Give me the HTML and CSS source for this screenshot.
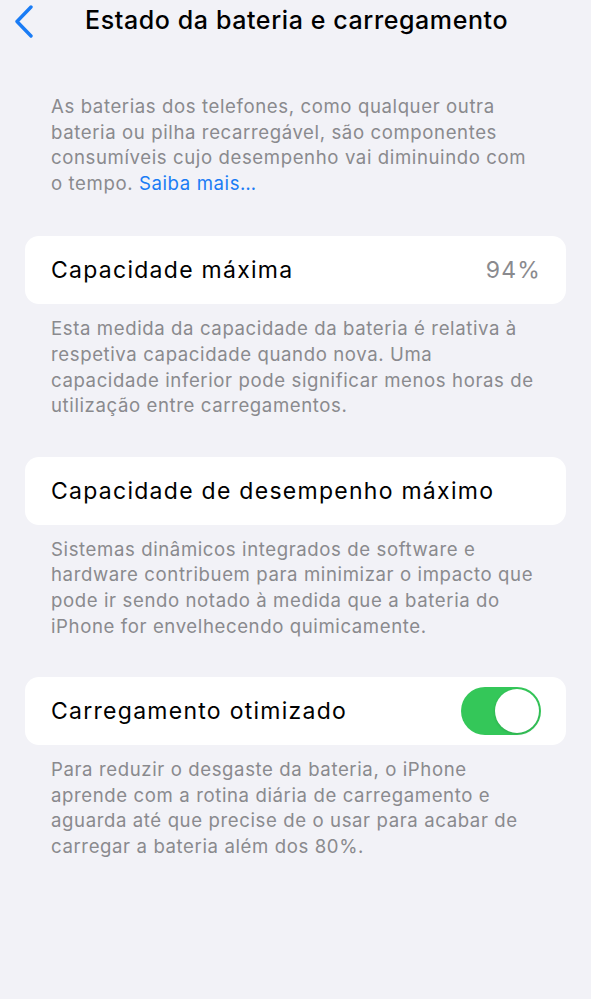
FILE: index.html
```html
<!DOCTYPE html>
<html lang="pt">
<head>
<meta charset="utf-8">
<link rel="stylesheet" href="styles.css">
</head>
<body>
<header class="nav">
  <svg class="back" width="24" height="36" viewBox="0 0 24 36"><path d="M19 5 L5 19.5 L19 34" fill="none" stroke="#1a7cf5" stroke-width="3.4" stroke-linecap="round" stroke-linejoin="round"/></svg>
  <h1 class="title">Estado da bateria e carregamento</h1>
</header>
<main class="content">
  <p class="intro">As baterias dos telefones, como qualquer outra bateria ou pilha recarregável, são componentes consumíveis cujo desempenho vai diminuindo com o tempo. <span class="link">Saiba mais…</span></p>

  <section class="group">
    <div class="card"><span class="label">Capacidade máxima</span><span class="value">94%</span></div>
    <p class="foot">Esta medida da capacidade da bateria é relativa à respetiva capacidade quando nova. Uma capacidade inferior pode significar menos horas de utilização entre carregamentos.</p>
  </section>

  <section class="group">
    <div class="card"><span class="label">Capacidade de desempenho máximo</span></div>
    <p class="foot">Sistemas dinâmicos integrados de software e hardware contribuem para minimizar o impacto que pode ir sendo notado à medida que a bateria do iPhone for envelhecendo quimicamente.</p>
  </section>

  <section class="group">
    <div class="card"><span class="label">Carregamento otimizado</span><span class="toggle"><span class="knob"></span></span></div>
    <p class="foot">Para reduzir o desgaste da bateria, o iPhone aprende com a rotina diária de carregamento e aguarda até que precise de o usar para acabar de carregar a bateria além dos 80%.</p>
  </section>
</main>
</body>
</html>
```

FILE: styles.css
```css
html, body {
  margin: 0;
  padding: 0;
}
body {
  background: #f2f2f7;
  font-family: Inter, "Noto Sans", sans-serif;
  color: #000;
  width: 591px;
  min-height: 999px;
}
.nav {
  height: 42px;
  display: flex;
  align-items: center;
  padding-left: 12px;
}
.back {
  display: block;
  margin-top: -2px;
}
.title {
  margin: -2px 0 0 49px;
  font-size: 25px;
  font-weight: 500;
  letter-spacing: 0.6px;
  white-space: nowrap;
}
.content {
  padding: 52px 25px 0;
}
.intro, .foot {
  margin: 0;
  padding: 0 26px;
  font-size: 18.6px;
  line-height: 25.6px;
  letter-spacing: 0.6px;
  color: #8a8a8e;
}
.link {
  color: #1a7cf5;
}
.intro {
  margin-bottom: 40px;
}
.group {
  margin-bottom: 38px;
}
.card {
  background: #fff;
  border-radius: 14px;
  height: 68px;
  display: flex;
  align-items: center;
  justify-content: space-between;
  padding: 0 25px 0 26px;
}
.label {
  font-size: 23px;
  letter-spacing: 1.27px;
}
.value {
  font-size: 23px;
  letter-spacing: 1.2px;
  color: #8a8a8e;
}
.foot {
  margin-top: 12px;
}
.toggle {
  width: 80px;
  height: 48px;
  border-radius: 24px;
  background: #34c759;
  display: flex;
  align-items: center;
  justify-content: flex-end;
  padding: 0 2px;
  box-sizing: border-box;
}
.knob {
  width: 44px;
  height: 44px;
  border-radius: 50%;
  background: #fff;
  box-shadow: 0 1px 3px rgba(0,0,0,0.15);
}
```
